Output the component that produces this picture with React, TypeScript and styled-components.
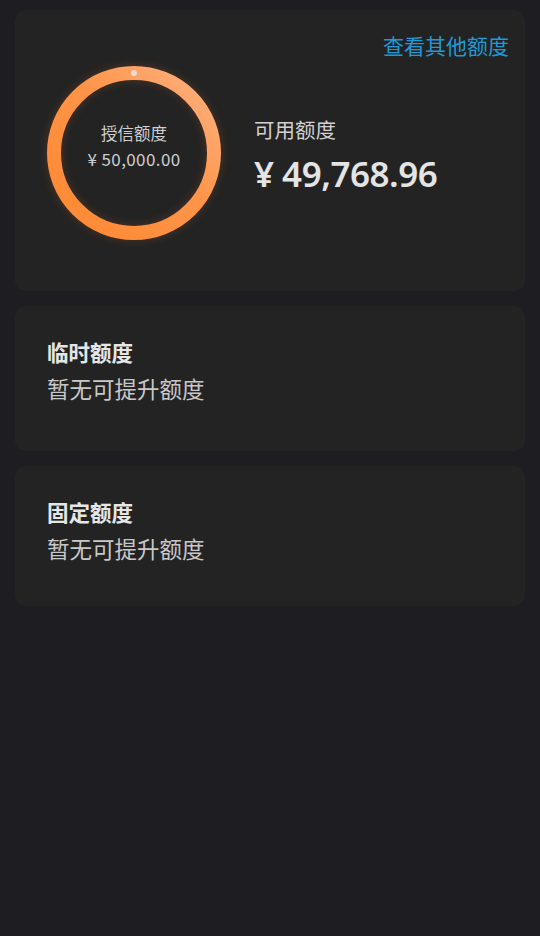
import React from "react";
import styled, { createGlobalStyle } from "styled-components";

const Global = createGlobalStyle`
  html, body { margin: 0; padding: 0; background: #1d1d22; }
  body { font-family: "Noto Sans CJK SC", "Noto Sans", sans-serif; }
  #root { min-height: 936px; }
`;

const Page = styled.div`
  min-height: 936px;
  background: #1d1d22;
  padding: 10px 15px;
  box-sizing: border-box;
  display: flex;
  flex-direction: column;
  gap: 15px;
`;

const Card = styled.section<{ $pad: string }>`
  background: #232323;
  border-radius: 10px;
  padding: ${(p) => p.$pad};
  display: flex;
  flex-direction: column;
`;

const LinkRow = styled.div`
  display: flex;
  justify-content: flex-end;
`;

const Link = styled.a`
  color: #1f9ad6;
  font-size: 21px;
  line-height: 26px;
  text-decoration: none;
`;

const Body = styled.div`
  display: flex;
  align-items: center;
  gap: 33px;
  margin-top: 8px;
`;

const RingWrap = styled.div`
  position: relative;
  width: 174px;
  height: 174px;
  flex: none;
`;

const RingSvg = styled.svg`
  position: absolute;
  inset: 0;
  filter: drop-shadow(0 0 5px rgba(255, 130, 50, 0.2));
`;

const RingText = styled.div`
  position: absolute;
  inset: 0;
  display: flex;
  flex-direction: column;
  align-items: center;
  justify-content: center;
  gap: 4px;
  color: #cfcfcf;
  padding-bottom: 14px;
`;

const RingLabel = styled.div`
  font-size: 16.5px;
  line-height: 22px;
`;

const RingAmount = styled.div`
  font-size: 17px;
  line-height: 22px;
  letter-spacing: 0.4px;
`;

const Info = styled.div`
  display: flex;
  flex-direction: column;
  gap: 10px;
  margin-top: 4px;
`;

const InfoLabel = styled.div`
  color: #d2d2d2;
  font-size: 20.5px;
  line-height: 28px;
`;

const InfoAmount = styled.div`
  color: #e4e4e4;
  font-size: 35px;
  line-height: 42px;
  font-weight: 600;
  letter-spacing: -0.5px;
  font-family: "Noto Sans", "Noto Sans CJK SC", sans-serif;
`;

const Title = styled.div`
  color: #e6e6e6;
  font-size: 21.5px;
  line-height: 30px;
  font-weight: 700;
`;

const Sub = styled.div`
  color: #c8c8c8;
  font-size: 22.5px;
  line-height: 30px;
  margin-top: 6px;
`;

const Ring = () => (
  <RingSvg width="174" height="174" viewBox="0 0 174 174">
    <defs>
      <linearGradient id="rg" x1="0" y1="1" x2="1" y2="0">
        <stop offset="0" stopColor="#ff8832" />
        <stop offset="0.55" stopColor="#ff9448" />
        <stop offset="1" stopColor="#ffb283" />
      </linearGradient>
    </defs>
    <circle cx="87" cy="87" r="80" fill="none" stroke="url(#rg)" strokeWidth="14" />
    <circle cx="87" cy="7" r="3" fill="#eadbd3" />
  </RingSvg>
);

const Section = ({ title, pad }: { title: string; pad: string }) => (
  <Card $pad={pad}>
    <Title>{title}</Title>
    <Sub>暂无可提升额度</Sub>
  </Card>
);

export default function App() {
  return (
    <>
      <Global />
      <Page>
        <Card $pad="22px 16px 51px 32px">
          <LinkRow>
            <Link>查看其他额度</Link>
          </LinkRow>
          <Body>
            <RingWrap>
              <Ring />
              <RingText>
                <RingLabel>授信额度</RingLabel>
                <RingAmount>¥ 50,000.00</RingAmount>
              </RingText>
            </RingWrap>
            <Info>
              <InfoLabel>可用额度</InfoLabel>
              <InfoAmount>¥ 49,768.96</InfoAmount>
            </Info>
          </Body>
        </Card>
        <Section title="临时额度" pad="31px 32px 48px" />
        <Section title="固定额度" pad="31px 32px 43px" />
      </Page>
    </>
  );
}
